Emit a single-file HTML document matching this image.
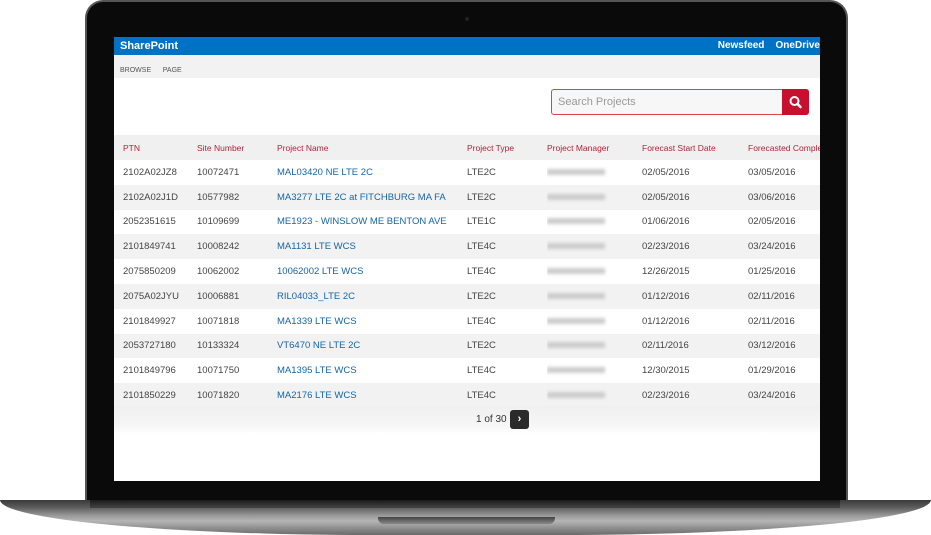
<!DOCTYPE html><html><head><style>
*{margin:0;padding:0;box-sizing:border-box}
body{width:931px;height:535px;background:#fff;position:relative;overflow:hidden;font-family:"Liberation Sans",sans-serif}
.lid{position:absolute;left:85px;top:0;width:763px;height:505px;background:#0a0a0a;border-radius:18px 18px 0 0;border:2px solid #555;border-bottom:none}
.base{position:absolute;left:0;top:500px;width:931px;height:35px;background:linear-gradient(#3a3a3a 0,#5a5a5a 20%,#9a9a9a 45%,#b5b5b5 60%,#6a6a6a 100%);border-radius:0 0 40% 40%/0 0 100% 100%}
.base2{position:absolute;left:90px;top:500px;width:750px;height:8px;background:linear-gradient(#1a1a1a,#444)}
.notch{position:absolute;left:378px;top:517px;width:177px;height:7px;background:linear-gradient(#444,#888);border-radius:0 0 6px 6px}
.screen{position:absolute;left:114px;top:37px;width:706px;height:444px;background:#fff;overflow:hidden}
.top{height:18px;background:#0072c6;color:#fff;font-size:11px;font-weight:bold;line-height:18px;padding-left:6px;position:relative}
.top .r{position:absolute;right:0;top:0;font-size:10px}
.ribbon{height:23px;background:#f2f2f2;font-size:7px;color:#555;line-height:32px;padding-left:6px}
.search{position:absolute;left:437px;top:52px;width:258px;height:26px;border:1px solid #d44;border-radius:3px;background:#f7f7f7;font-size:11px;color:#999;line-height:24px;padding-left:6px}
.btn{position:absolute;right:-1px;top:-1px;width:27px;height:26px;background:#c8102e;border-radius:0 3px 3px 0}
table{position:absolute;top:98px;left:0;width:720px;border-collapse:collapse;font-size:9.5px;color:#444;table-layout:fixed}
td{height:24.8px;white-space:nowrap;padding:0;overflow:hidden}
tr.h td{color:#b0243a;font-size:8.5px;background:#f0f0f0;height:25px}
tr:nth-child(odd):not(.h) td{background:#f2f2f2}
a{color:#1565a8;text-decoration:none}
.blur{display:inline-block;width:58px;height:6px;background:#ccc;filter:blur(1.5px)}
.pg{position:absolute;top:369px;left:0;width:706px;height:28px;background:linear-gradient(#f0f0f0,#f6f6f6 70%,#fff);font-size:10px;color:#333}
</style></head><body>
<div class="lid"></div>
<div class="base"></div><div class="base2"></div><div class="notch"></div>
<div style="position:absolute;left:465px;top:17px;width:4px;height:4px;border-radius:50%;background:#222"></div>
<div class="screen">
<div class="top">SharePoint<span class="r">Newsfeed&nbsp;&nbsp;&nbsp; OneDrive</span></div>
<div class="ribbon">BROWSE&nbsp;&nbsp;&nbsp;&nbsp;&nbsp; PAGE</div>
<div class="search">Search Projects<div class="btn"><svg width="27" height="26" viewBox="0 0 27 26"><circle cx="12.5" cy="12" r="4" fill="none" stroke="#fff" stroke-width="2"/><path d="M15.5 15l3 3" stroke="#fff" stroke-width="2.5" stroke-linecap="round"/></svg></div></div>
<table>
<colgroup><col style="width:83px"><col style="width:80px"><col style="width:190px"><col style="width:80px"><col style="width:95px"><col style="width:106px"><col style="width:86px"></colgroup>
<tr class="h"><td style="padding-left:9px">PTN</td><td>Site Number</td><td>Project Name</td><td>Project Type</td><td>Project Manager</td><td>Forecast Start Date</td><td>Forecasted Completion</td></tr>
<tr><td style="padding-left:9px">2102A02JZ8</td><td>10072471</td><td><a>MAL03420 NE LTE 2C</a></td><td>LTE2C</td><td><span class="blur"></span></td><td>02/05/2016</td><td>03/05/2016</td></tr>
<tr><td style="padding-left:9px">2102A02J1D</td><td>10577982</td><td><a>MA3277 LTE 2C at FITCHBURG MA FA</a></td><td>LTE2C</td><td><span class="blur"></span></td><td>02/05/2016</td><td>03/06/2016</td></tr>
<tr><td style="padding-left:9px">2052351615</td><td>10109699</td><td><a>ME1923 - WINSLOW ME BENTON AVE</a></td><td>LTE1C</td><td><span class="blur"></span></td><td>01/06/2016</td><td>02/05/2016</td></tr>
<tr><td style="padding-left:9px">2101849741</td><td>10008242</td><td><a>MA1131 LTE WCS</a></td><td>LTE4C</td><td><span class="blur"></span></td><td>02/23/2016</td><td>03/24/2016</td></tr>
<tr><td style="padding-left:9px">2075850209</td><td>10062002</td><td><a>10062002 LTE WCS</a></td><td>LTE4C</td><td><span class="blur"></span></td><td>12/26/2015</td><td>01/25/2016</td></tr>
<tr><td style="padding-left:9px">2075A02JYU</td><td>10006881</td><td><a>RIL04033_LTE 2C</a></td><td>LTE2C</td><td><span class="blur"></span></td><td>01/12/2016</td><td>02/11/2016</td></tr>
<tr><td style="padding-left:9px">2101849927</td><td>10071818</td><td><a>MA1339 LTE WCS</a></td><td>LTE4C</td><td><span class="blur"></span></td><td>01/12/2016</td><td>02/11/2016</td></tr>
<tr><td style="padding-left:9px">2053727180</td><td>10133324</td><td><a>VT6470 NE LTE 2C</a></td><td>LTE2C</td><td><span class="blur"></span></td><td>02/11/2016</td><td>03/12/2016</td></tr>
<tr><td style="padding-left:9px">2101849796</td><td>10071750</td><td><a>MA1395 LTE WCS</a></td><td>LTE4C</td><td><span class="blur"></span></td><td>12/30/2015</td><td>01/29/2016</td></tr>
<tr><td style="padding-left:9px">2101850229</td><td>10071820</td><td><a>MA2176 LTE WCS</a></td><td>LTE4C</td><td><span class="blur"></span></td><td>02/23/2016</td><td>03/24/2016</td></tr>
</table>
<div class="pg"><span style="position:absolute;left:362px;top:8px">1 of 30</span><span style="position:absolute;left:396px;top:4px;width:19px;height:19px;background:#2a2a2a;border-radius:3px;color:#fff;font-weight:bold;text-align:center;line-height:19px;font-size:11px">›</span></div>
</div>
</body></html>
